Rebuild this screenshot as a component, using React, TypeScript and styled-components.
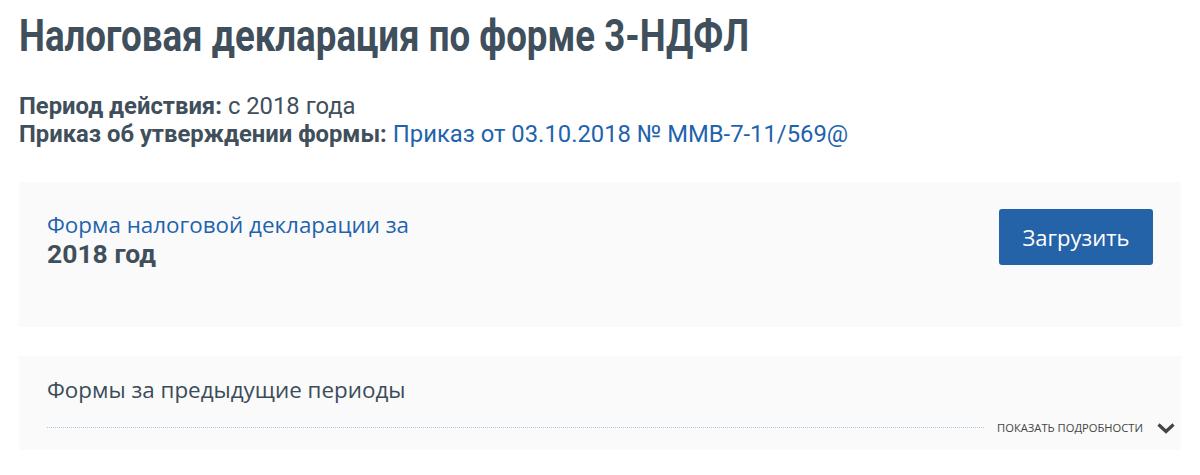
import React from 'react'
import styled, { createGlobalStyle } from 'styled-components'

const GlobalStyle = createGlobalStyle`
  html, body {
    margin: 0;
    padding: 0;
    background: #ffffff;
  }
  body {
    font-family: "Open Sans", "Noto Sans", sans-serif;
    color: #3d4d5a;
  }
`

// the site uses a condensed DIN-like face; Roboto squeezed horizontally stands in for it
const din = `"Roboto", "Liberation Sans", sans-serif`

const Page = styled.main`
  padding: 8px 19px 0;
  display: flex;
  flex-direction: column;
`

const Title = styled.h1`
  margin: 0;
  font-family: ${din};
  font-weight: 700;
  font-size: 45px;
  line-height: 56px;
  color: #3f4f5c;
  white-space: nowrap;
  transform: scaleX(0.815);
  transform-origin: left center;
`

const Meta = styled.dl`
  margin: 28px 0 0;
  font-family: ${din};
  font-size: 23.8px;
  line-height: 28px;
  color: #3f4f5c;
`

const MetaRow = styled.div`
  display: flex;
  gap: 6px;
  white-space: nowrap;
`

const MetaLabel = styled.dt`
  font-weight: 700;
`

const MetaValue = styled.dd`
  margin: 0;
`

const MetaLink = styled.a`
  color: #1f63ad;
  text-decoration: none;
`

const Card = styled.section`
  background: #fafafa;
  box-sizing: border-box;
`

const CurrentCard = styled(Card)`
  margin-top: 34px;
  min-height: 145px;
  padding: 28px 28px 0;
  display: flex;
  justify-content: space-between;
  align-items: flex-start;
`

const PrevCard = styled(Card)`
  margin-top: 29px;
  min-height: 94px;
  padding: 20px 6px 14px 28px;
`

const FormTitle = styled.div`
  display: flex;
  flex-direction: column;
  align-items: flex-start;
  padding-top: 1px;
`

const FormLink = styled.a`
  font-size: 22.4px;
  line-height: 28px;
  color: #1f63ad;
  text-decoration: none;
`

const FormYear = styled.div`
  font-family: ${din};
  font-weight: 700;
  font-size: 26.5px;
  line-height: 30px;
  color: #3f4f5c;
`

const UploadButton = styled.button`
  width: 154px;
  height: 56px;
  margin-top: -1px;
  border: none;
  border-radius: 3px;
  background: #2563a9;
  color: #ffffff;
  font-family: "Open Sans", sans-serif;
  font-size: 22px;
  cursor: pointer;
`

const SectionHeading = styled.h2`
  margin: 0;
  font-weight: 400;
  font-size: 22.4px;
  line-height: 28px;
  color: #3a4c59;
`

const DetailsRow = styled.div`
  display: flex;
  align-items: center;
  gap: 13px;
  margin-top: 16px;
`

const Dots = styled.div`
  flex: 1;
  border-top: 1px dotted #a9c8e6;
`

const DetailsToggle = styled.button`
  display: flex;
  align-items: center;
  gap: 14px;
  padding: 0;
  border: none;
  background: none;
  font-family: "Open Sans", sans-serif;
  font-size: 11.2px;
  color: #444444;
  text-transform: uppercase;
  cursor: pointer;
`

const Chevron = () => (
  <svg width="18" height="12" viewBox="0 0 18 12" aria-hidden="true">
    <path d="M1.5 2.5 L9 9.5 L16.5 2.5" fill="none" stroke="#444" strokeWidth="3.2" />
  </svg>
)

export default function App() {
  return (
    <>
      <GlobalStyle />
      <Page>
        <Title>Налоговая декларация по форме 3-НДФЛ</Title>
        <Meta>
          <MetaRow>
            <MetaLabel>Период действия:</MetaLabel>
            <MetaValue>с 2018 года</MetaValue>
          </MetaRow>
          <MetaRow>
            <MetaLabel>Приказ об утверждении формы:</MetaLabel>
            <MetaValue>
              <MetaLink href="#">Приказ от 03.10.2018 № ММВ-7-11/569@</MetaLink>
            </MetaValue>
          </MetaRow>
        </Meta>
        <CurrentCard>
          <FormTitle>
            <FormLink href="#">Форма налоговой декларации за</FormLink>
            <FormYear>2018 год</FormYear>
          </FormTitle>
          <UploadButton>Загрузить</UploadButton>
        </CurrentCard>
        <PrevCard>
          <SectionHeading>Формы за предыдущие периоды</SectionHeading>
          <DetailsRow>
            <Dots />
            <DetailsToggle>
              Показать подробности
              <Chevron />
            </DetailsToggle>
          </DetailsRow>
        </PrevCard>
      </Page>
    </>
  )
}
